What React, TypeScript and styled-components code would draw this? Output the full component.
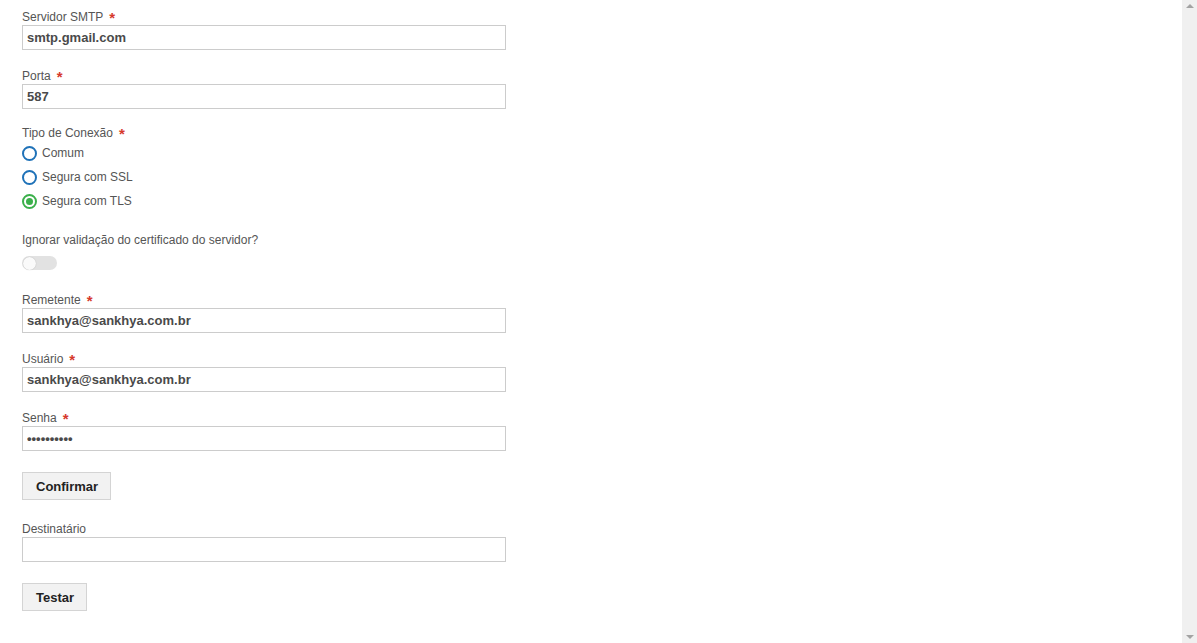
import styled, { createGlobalStyle } from "styled-components";

const GlobalStyle = createGlobalStyle`
  html, body {
    margin: 0;
    padding: 0;
    background: #ffffff;
    font-family: "Liberation Sans", Arial, sans-serif;
    overflow: hidden;
  }
`;

const Page = styled.div`
  display: flex;
  width: 100%;
  height: 643px;
`;

const Content = styled.div`
  flex: 1;
  padding: 9px 0 0 22px;
  display: flex;
  flex-direction: column;
  align-items: flex-start;
`;

const ScrollBar = styled.div`
  width: 15px;
  background: #f0f0f0;
  display: flex;
  flex-direction: column;
  justify-content: space-between;
  align-items: center;
  padding: 4px 0;
  box-sizing: border-box;
`;

const Arrow = styled.div<{ down?: boolean }>`
  width: 0;
  height: 0;
  border-left: 4px solid transparent;
  border-right: 4px solid transparent;
  ${(p) =>
    p.down ? "border-top: 4px solid #a3a3a3;" : "border-bottom: 4px solid #a3a3a3;"}
`;

const Field = styled.div<{ gap?: number }>`
  display: flex;
  flex-direction: column;
  margin-bottom: ${(p) => (p.gap ?? 18)}px;
`;

const Label = styled.label`
  font-size: 12px;
  line-height: 16px;
  height: 16px;
  color: #555555;
  display: flex;
  align-items: center;
`;

const Required = styled.span`
  color: #d6392c;
  font-size: 15px;
  font-weight: bold;
  margin-left: 6px;
  line-height: 16px;
  position: relative;
  top: 1px;
`;

const Input = styled.input`
  width: 484px;
  height: 25px;
  box-sizing: border-box;
  border: 1px solid #cccccc;
  padding: 0 4px;
  font-family: "Liberation Sans", Arial, sans-serif;
  font-size: 13px;
  font-weight: bold;
  color: #4a4a4a;
  outline: none;
  margin: 0;
  background: #ffffff;
`;

const RadioRow = styled.div`
  display: flex;
  align-items: center;
  height: 24px;
  gap: 5px;
  font-size: 12px;
  color: #555555;
`;

const RadioCircle = styled.span<{ checked?: boolean }>`
  width: 15px;
  height: 15px;
  box-sizing: border-box;
  border-radius: 50%;
  border: 2px solid ${(p) => (p.checked ? "#3bb04b" : "#1f72b8")};
  display: flex;
  align-items: center;
  justify-content: center;
  &::after {
    content: "";
    width: 7px;
    height: 7px;
    border-radius: 50%;
    background: ${(p) => (p.checked ? "#3bb04b" : "transparent")};
  }
`;

const Toggle = styled.div`
  width: 35px;
  height: 14px;
  margin-top: 8px;
  border-radius: 7px;
  background: #e2e2e2;
  display: flex;
  align-items: center;
  padding: 0 1px;
  box-sizing: border-box;
`;

const Knob = styled.span`
  width: 13px;
  height: 13px;
  border-radius: 50%;
  background: #fafafa;
  box-shadow: 0 0 1px rgba(0, 0, 0, 0.25);
`;

const Button = styled.button`
  height: 28px;
  padding: 0 12px 0 13px;
  border: 1px solid #d4d4d4;
  background: #f2f2f2;
  font-family: "Liberation Sans", Arial, sans-serif;
  font-size: 13px;
  font-weight: bold;
  color: #222222;
  cursor: pointer;
  margin: 0;
`;

const Block = styled.div<{ gap?: number }>`
  margin-bottom: ${(p) => (p.gap ?? 0)}px;
`;

type TextFieldProps = {
  label: string;
  value: string;
  required?: boolean;
  type?: string;
  gap?: number;
};

const TextField = ({ label, value, required, type, gap }: TextFieldProps) => (
  <Field gap={gap}>
    <Label>
      {label}
      {required && <Required>*</Required>}
    </Label>
    <Input type={type ?? "text"} defaultValue={value} readOnly />
  </Field>
);

const options = [
  { label: "Comum", checked: false },
  { label: "Segura com SSL", checked: false },
  { label: "Segura com TLS", checked: true },
];

export default function App() {
  return (
    <>
      <GlobalStyle />
      <Page>
        <Content>
          <TextField label="Servidor SMTP" value="smtp.gmail.com" required />
          <TextField label="Porta" value="587" required gap={16} />
          <Field gap={19}>
            <Label>
              Tipo de Conexão
              <Required>*</Required>
            </Label>
            {options.map((o) => (
              <RadioRow key={o.label}>
                <RadioCircle checked={o.checked} />
                {o.label}
              </RadioRow>
            ))}
          </Field>
          <Field gap={22}>
            <Label>Ignorar validação do certificado do servidor?</Label>
            <Toggle>
              <Knob />
            </Toggle>
          </Field>
          <TextField label="Remetente" value="sankhya@sankhya.com.br" required />
          <TextField label="Usuário" value="sankhya@sankhya.com.br" required />
          <TextField label="Senha" value="sankhya123" type="password" required gap={21} />
          <Block gap={21}>
            <Button>Confirmar</Button>
          </Block>
          <TextField label="Destinatário" value="" gap={21} />
          <Block>
            <Button>Testar</Button>
          </Block>
        </Content>
        <ScrollBar>
          <Arrow />
          <Arrow down />
        </ScrollBar>
      </Page>
    </>
  );
}
